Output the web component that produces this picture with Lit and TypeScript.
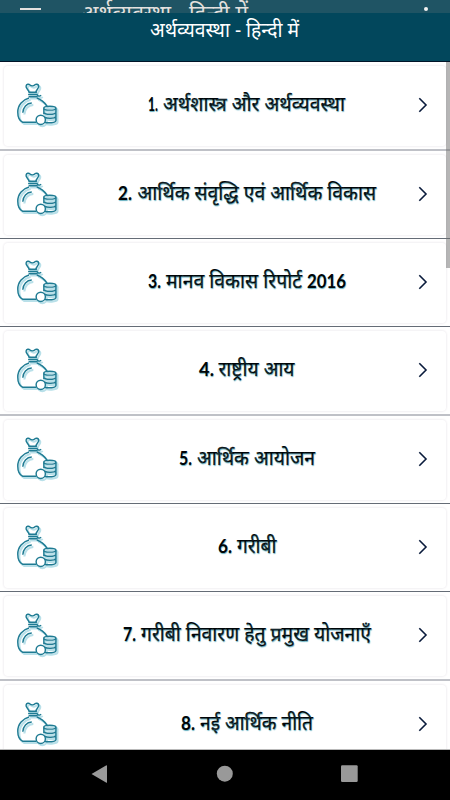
import { LitElement, html, css, svg } from "lit";
import { customElement } from "lit/decorators.js";

interface Chapter {
  no: string;
  noWidth: number;
  title: string;
  start: number;
  titleWidth: number;
  tail?: string;
  width: number;
  height: number;
  soft?: boolean;
}

const chapters: Chapter[] = [
  { no: "1.", noWidth: 10, title: "अर्थशास्त्र और अर्थव्यवस्था", start: 15, titleWidth: 182, width: 197, height: 89, soft: true },
  { no: "2.", noWidth: 14, title: "आर्थिक संवृद्धि एवं आर्थिक विकास", start: 19.5, titleWidth: 238.5, width: 258, height: 88 },
  { no: "3.", noWidth: 13, title: "मानव विकास रिपोर्ट", start: 18, titleWidth: 136, tail: "2016", width: 198, height: 88 },
  { no: "4.", noWidth: 15, title: "राष्ट्रीय आय", start: 19.5, titleWidth: 76, width: 95, height: 89, soft: true },
  { no: "5.", noWidth: 13, title: "आर्थिक आयोजन", start: 18, titleWidth: 118, width: 136, height: 88 },
  { no: "6.", noWidth: 14, title: "गरीबी", start: 19, titleWidth: 39.5, width: 58, height: 88 },
  { no: "7.", noWidth: 13, title: "गरीबी निवारण हेतु प्रमुख योजनाएँ", start: 18, titleWidth: 230, width: 248, height: 89, soft: true },
  { no: "8.", noWidth: 14, title: "नई आर्थिक नीति", start: 19, titleWidth: 113, width: 132, height: 88 },
];

const bagShapes = svg`
  <path d="M12.5 9.5C12.3 6.5 9 5.5 9.4 3C9.8 .7 12.3 .6 13.2 1.6C14.6 3 17.2 3 18.6 1.6C19.6 .6 22.2 .7 22.5 3C22.8 5.3 19.8 6.5 19.6 9.5"/>
  <path d="M12 9.3H20.6M11.5 11.6H21.5M12 13.9H21.2M20.5 11.8Q22.5 14.5 25 12.4"/>
  <path d="M12.5 15.2C6 17 .8 22.5 .8 30C.8 34.5 2.5 39 6 40.4H20"/>
  <path d="M20.5 15.2C25 16.8 28.5 19.8 31 23.6"/>
  <path d="M6 30.5C6.3 25 10 20.7 15.3 20.5"/>
  <path d="M27.8 26V32M40.3 26V38.5C40.3 41 32 41.5 28.5 40.3M27.8 30.4C29 32.7 39 32.7 40.3 30.4M28.8 35C31 37 39 36.5 40.3 34.5"/>
  <ellipse cx="34" cy="25.8" rx="6.3" ry="2"/>
`;

@customElement("app-root")
export class AppRoot extends LitElement {
  static styles = css`
    :host { display: block; }
    .screen {
      width: 450px; height: 800px; overflow: hidden; position: relative;
      display: flex; flex-direction: column; background: #fff;
      font-family: "Noto Sans", "Noto Sans Devanagari", sans-serif;
    }
    .status {
      height: 13px; flex: none; overflow: hidden; background: #1f5464;
      display: flex; align-items: flex-start;
    }
    .status .menu { width: 21px; height: 2px; margin: 8px 40px 0 20px; background: #e4e1df; }
    .status svg { flex: none; overflow: hidden; }
    .status text { font-size: 23px; fill: #e4e1df; }
    .status .dot { width: 4px; height: 4px; border-radius: 50%; background: #f2f2f2; margin: 7px 22px 0 auto; }
    .header {
      height: 48px; flex: none; background: #02475c; border-bottom: 1px solid #001428;
      box-sizing: content-box;
    }
    .header svg, .title svg { display: block; overflow: visible; }
    .header svg { margin: 0 auto; }
    .header text { font-size: 20px; fill: #fff; }
    .list { flex: 1; overflow: hidden; border-bottom: 1px solid #b9b9b9; }
    .row {
      box-sizing: border-box; padding: 4px 4px 3px; display: flex; flex-direction: column;
      border-bottom: 1px solid #656c76;
    }
    .row.soft { border-bottom: 2px solid #bfc1c7; }
    .card {
      flex: 1; border-radius: 4px; background: #fff; box-shadow: 0 0 2px 1px #f2f0f3;
      display: flex; align-items: center;
    }
    .bag { width: 42.5px; height: 45px; flex: none; margin: 0 0 1px 12.5px; overflow: visible; }
    .title { flex: 1; display: flex; justify-content: center; padding-left: 17px; padding-right: 1px; }
    .title text {
      font-size: 20.5px; font-weight: 400; fill: #000508; text-shadow: 0.5px 0.5px 1px #68b0c0;
      stroke: #000508; stroke-width: 0.2px;
    }
    .title .latin { font-family: Lato, sans-serif; font-weight: 700; font-size: 19.5px; stroke-width: 0; }
    .chev { width: 10px; height: 16px; flex: none; margin: 0 18px 2px 0; }
    .scroll { position: absolute; right: 0; top: 62px; width: 4.5px; height: 206px; background: rgba(110, 110, 110, .5); }
    .nav { height: 50px; flex: none; background: #000; display: flex; }
    .nav svg { width: 450px; height: 50px; }
  `;

  render() {
    return html`
      <div class="screen">
        <div class="status">
          <span class="menu"></span>
          <svg width="168" height="13">
            <text x="1" y="21" textLength="166" lengthAdjust="spacingAndGlyphs">अर्थव्यवस्था - हिन्दी में</text>
          </svg>
          <span class="dot"></span>
        </div>
        <div class="header">
          <svg width="150" height="36">
            <text x="0" y="24" textLength="149" lengthAdjust="spacingAndGlyphs">अर्थव्यवस्था - हिन्दी में</text>
          </svg>
        </div>
        <div class="list">
          ${chapters.map((c) => html`
            <div class="row ${c.soft ? "soft" : ""}" style="height:${c.height}px">
              <div class="card">
                <svg class="bag" viewBox="0 0 44 46" fill="none" stroke-width="1.5">
                  <g transform="translate(1.6 1.8)" stroke="#b9e0e9" stroke-width="2.2">${bagShapes}<circle cx="24.6" cy="37.8" r="4.8"/></g>
                  <g stroke="#1f7b93">${bagShapes}<circle cx="24.6" cy="37.8" r="4.8" fill="#fff"/></g>
                </svg>
                <div class="title">
                  <svg width=${c.width} height="30">
                    <text class="latin" x="0" y="20" textLength=${c.noWidth} lengthAdjust="spacingAndGlyphs">${c.no}</text>
                    <text x=${c.start} y="20" textLength=${c.titleWidth} lengthAdjust="spacingAndGlyphs">${c.title}</text>
                    ${c.tail ? svg`<text class="latin" x="159" y="20" textLength="39" lengthAdjust="spacingAndGlyphs">${c.tail}</text>` : ""}
                  </svg>
                </div>
                <svg class="chev" viewBox="0 0 10 16" fill="none" stroke="#0a1b3c" stroke-width="1.6"><path d="M1.3 1.3L8 8L1.3 14.7"/></svg>
              </div>
            </div>`)}
        </div>
        <div class="scroll"></div>
        <div class="nav">
          <svg viewBox="0 0 450 50" fill="#999">
            <path d="M91.5 24L106 15.5Q107 15 107 16V32Q107 33.4 106 32.5Z"/>
            <circle cx="224.8" cy="23.7" r="8"/>
            <rect x="341" y="15.3" width="16.7" height="16.7" rx="1.2"/>
          </svg>
        </div>
      </div>`;
  }
}
